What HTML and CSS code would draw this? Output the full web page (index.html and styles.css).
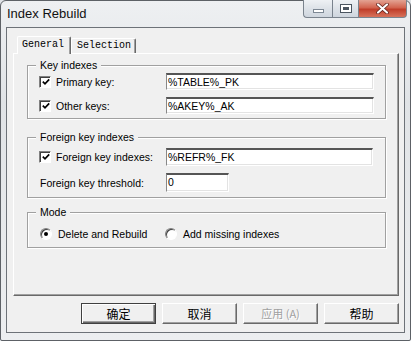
FILE: index.html
```html
<!DOCTYPE html>
<html lang="en">
<head>
    <meta charset="UTF-8">
    <title>Index Rebuild</title>
    <link rel="stylesheet" href="styles.css">
</head>
<body>
    <div class="window">
        <div class="titlebar">
            <span class="title">Index Rebuild</span>
            <div class="caption-buttons">
                <div class="cap-btn cap-min">
                    <svg width="11" height="4" viewBox="0 0 11 4"><rect x="0.5" y="0.5" width="10" height="3" fill="#fff" stroke="#7d8894"/></svg>
                </div>
                <div class="cap-btn cap-max">
                    <svg width="12" height="9" viewBox="0 0 12 9"><rect x="0.5" y="0.5" width="11" height="8" fill="#fff" stroke="#4b5560"/><rect x="3" y="3" width="6" height="3" fill="#4b5560"/></svg>
                </div>
                <div class="cap-btn cap-close">
                    <svg width="13" height="11" viewBox="0 0 13 11"><path d="M2 1.5 L11 9.5 M11 1.5 L2 9.5" stroke="#5a1e18" stroke-width="3.6" stroke-linecap="round"/><path d="M2 1.5 L11 9.5 M11 1.5 L2 9.5" stroke="#fff" stroke-width="2.2" stroke-linecap="round"/></svg>
                </div>
            </div>
        </div>

        <div class="client">
            <div class="tabs">
                <div class="tab active">General</div>
                <div class="tab">Selection</div>
            </div>

            <div class="panel">
                <fieldset class="group group-keys">
                    <legend>Key indexes</legend>
                    <div class="row">
                        <span class="field-label"><span class="check"><svg width="8" height="8" viewBox="0 0 8 8"><path d="M0.8 3.6 L3 5.8 L7.2 1.4" fill="none" stroke="#000" stroke-width="1.7"/></svg></span>Primary key:</span>
                        <div class="edit">%TABLE%_PK</div>
                    </div>
                    <div class="row">
                        <span class="field-label"><span class="check"><svg width="8" height="8" viewBox="0 0 8 8"><path d="M0.8 3.6 L3 5.8 L7.2 1.4" fill="none" stroke="#000" stroke-width="1.7"/></svg></span>Other keys:</span>
                        <div class="edit">%AKEY%_AK</div>
                    </div>
                </fieldset>

                <fieldset class="group group-foreign">
                    <legend>Foreign key indexes</legend>
                    <div class="row">
                        <span class="field-label"><span class="check"><svg width="8" height="8" viewBox="0 0 8 8"><path d="M0.8 3.6 L3 5.8 L7.2 1.4" fill="none" stroke="#000" stroke-width="1.7"/></svg></span>Foreign key indexes:</span>
                        <div class="edit edit-fk">%REFR%_FK</div>
                    </div>
                    <div class="row">
                        <span class="field-label">Foreign key threshold:</span>
                        <div class="edit edit-small">0</div>
                    </div>
                </fieldset>

                <fieldset class="group group-mode">
                    <legend>Mode</legend>
                    <div class="row">
                        <span class="option"><span class="radio checked"></span>Delete and Rebuild</span>
                        <span class="option"><span class="radio"></span>Add missing indexes</span>
                    </div>
                </fieldset>
            </div>

            <div class="buttons">
                <div class="button default">确定</div>
                <div class="button">取消</div>
                <div class="button disabled">应用 (A)</div>
                <div class="button">帮助</div>
            </div>
        </div>
    </div>
</body>
</html>
```

FILE: styles.css
```css
body {
    margin: 0;
    padding: 0;
    font-family: "Liberation Sans", Arial, sans-serif;
    font-size: 10.5px;
    color: #000;
    background: #dfe2e6;
}
.window {
    width: 411px;
    height: 341px;
    box-sizing: border-box;
    border: 1px solid #5d6166;
    border-radius: 6px 6px 2px 2px;
    padding: 0 5px 7px 5px;
    display: flex;
    flex-direction: column;
    background: linear-gradient(180deg, #eef0f2 0%, #e0e3e6 30%, #e8eaec 70%, #eceef0 100%);
}
.titlebar {
    height: 26px;
    display: flex;
    justify-content: space-between;
    align-items: flex-start;
}
.title {
    font-size: 13px;
    line-height: 16px;
    padding-top: 5px;
    padding-left: 1px;
    color: #111;
}
.caption-buttons {
    display: flex;
    margin-top: -1px;
    margin-right: -2px;
}
.cap-btn {
    height: 17px;
    display: flex;
    align-items: center;
    justify-content: center;
    border: 1px solid #7a838d;
    border-top: none;
    box-sizing: content-box;
}
.cap-min {
    width: 28px;
    border-radius: 0 0 0 4px;
    border-right: none;
    background: linear-gradient(180deg, #eef1f4 0%, #dde2e8 50%, #cfd6de 100%);
    align-items: flex-end;
}
.cap-min svg {
    margin-bottom: 4px;
}
.cap-max {
    width: 25px;
    background: linear-gradient(180deg, #eef1f4 0%, #dde2e8 50%, #cfd6de 100%);
}
.cap-close {
    width: 47px;
    border-left: none;
    border-radius: 0 0 4px 0;
    background: linear-gradient(180deg, #e3a393 0%, #d2644f 45%, #c03e2a 55%, #d8735c 100%);
}
.client {
    height: 306px;
    box-sizing: border-box;
    border: 1px solid #6d7278;
    background: #f0f0f0;
    display: flex;
    flex-direction: column;
}
.tabs {
    height: 17px;
    padding: 8px 0 0 10px;
    display: flex;
    align-items: flex-end;
}
.tab {
    font-family: "Liberation Mono", monospace;
    font-size: 10px;
    box-sizing: border-box;
    height: 15px;
    line-height: 13px;
    border-top: 1px solid #fff;
    border-left: 1px solid #fff;
    border-right: 1px solid #696969;
    border-radius: 2px 2px 0 0;
    box-shadow: inset -1px 0 0 #a0a0a0;
    background: #f0f0f0;
    padding: 0 4px 0 4px;
}
.tab.active {
    height: 18px;
    line-height: 16px;
    width: 54px;
    margin-bottom: -1px;
    position: relative;
    z-index: 1;
}
.tab + .tab {
    width: 65px;
    padding-left: 5px;
}
.panel {
    height: 243px;
    box-sizing: border-box;
    margin: 0 5px 0 6px;
    border-top: 1px solid #fff;
    border-left: 1px solid #fff;
    border-right: 1px solid #696969;
    border-bottom: 1px solid #696969;
    box-shadow: inset -1px -1px 0 #a0a0a0;
    padding: 5px 12px 0 13px;
}
.group {
    margin: 0;
    border: 1px solid #a0a0a0;
    box-shadow: inset 1px 1px 0 #fff, 1px 1px 0 #fff;
    padding: 1px 11px 4px 12px;
    min-inline-size: 0;
}
.group legend {
    padding: 0 4px;
    margin-left: -4px;
    line-height: 13px;
    background: #f0f0f0;
}
.group-foreign {
    margin-top: 12px;
    padding-top: 4px;
    padding-bottom: 6px;
}
.group-mode {
    margin-top: 8px;
    padding-top: 6px;
    padding-bottom: 5px;
}
.row {
    height: 17px;
    display: flex;
    align-items: center;
}
.row + .row {
    margin-top: 7px;
}
.group-foreign .row + .row {
    margin-top: 9px;
}
.field-label {
    width: 126px;
    display: flex;
    align-items: center;
}
.check {
    width: 10px;
    height: 10px;
    margin-right: 5px;
    margin-left: -1px;
    border-top: 1px solid #808080;
    border-left: 1px solid #808080;
    border-right: 1px solid #fff;
    border-bottom: 1px solid #fff;
    box-shadow: inset 1px 1px 0 #404040;
    background: #fff;
    display: flex;
    align-items: center;
    justify-content: center;
}
.check svg {
    margin: 1px 0 0 1px;
}
.edit {
    width: 208px;
    height: 17px;
    box-sizing: border-box;
    border-top: 2px solid #555;
    border-left: 1px solid #888;
    border-right: 1px solid #fff;
    border-bottom: 1px solid #fff;
    box-shadow: inset -1px -1px 0 #e3e3e3;
    background: #fff;
    padding-left: 1px;
    line-height: 14px;
    white-space: nowrap;
}
.edit-fk {
    width: 207px;
    height: 18px;
}
.edit-small {
    width: 63px;
    height: 19px;
}
.option {
    display: flex;
    align-items: center;
    width: 125px;
}
.radio {
    width: 10px;
    height: 10px;
    margin-right: 6px;
    border-radius: 50%;
    border: 1px solid;
    border-color: #808080 #fff #fff #808080;
    box-shadow: inset 1px 1px 0 #404040;
    background: #fff;
    display: flex;
    align-items: center;
    justify-content: center;
}
.radio.checked::after {
    content: "";
    width: 4px;
    height: 4px;
    border-radius: 50%;
    background: #000;
}
.buttons {
    margin: 7px 5px 0 0;
    display: flex;
    justify-content: flex-end;
    gap: 6px;
}
.button {
    width: 75px;
    height: 21px;
    box-sizing: border-box;
    border-top: 1px solid #fff;
    border-left: 1px solid #fff;
    border-right: 1px solid #696969;
    border-bottom: 1px solid #696969;
    box-shadow: inset -1px -1px 0 #a0a0a0;
    background: #f0f0f0;
    font-family: "Noto Sans CJK SC", sans-serif;
    font-size: 12px;
    line-height: 19px;
    text-align: center;
}
.button.default {
    border: 1px solid #404040;
    box-shadow: inset 1px 1px 0 #fff, inset -1px -1px 0 #696969, inset -2px -2px 0 #a0a0a0;
}
.button.disabled {
    color: #a0a0a0;
    text-shadow: 1px 1px 0 #fff;
    font-size: 11px;
}
```
